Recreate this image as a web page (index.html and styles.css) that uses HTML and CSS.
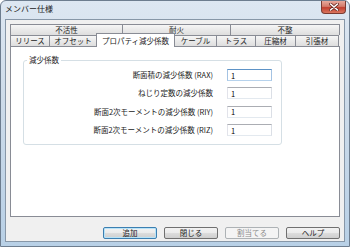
FILE: index.html
```html
<!DOCTYPE html>
<html lang="ja">
<head>
  <meta charset="UTF-8">
  <title>メンバー仕様</title>
  <link rel="stylesheet" href="styles.css">
</head>
<body>

  <div class="window">
    <!-- Title bar -->
    <div class="titlebar">
      <span class="title">メンバー仕様</span>
      <div class="close-btn">
        <svg width="10" height="8" viewBox="0 0 10 8">
          <path d="M1.5 1 L8.5 7 M8.5 1 L1.5 7" stroke="#6b2a22" stroke-width="3" stroke-linecap="round"/>
          <path d="M1.5 1 L8.5 7 M8.5 1 L1.5 7" stroke="#fff" stroke-width="1.6" stroke-linecap="round"/>
        </svg>
      </div>
    </div>

    <div class="client">
      <!-- Tabs -->
      <div class="tabs">
        <div class="tab-row">
          <div class="tab first" style="width: 113px">不活性</div>
          <div class="tab" style="width: 108px">耐火</div>
          <div class="tab" style="width: 109px">不整</div>
        </div>
        <div class="tab-row">
          <div class="tab first" style="width: 40px">リリース</div>
          <div class="tab" style="width: 47px">オフセット</div>
          <div class="tab active" style="width: 79px">プロパティ減少係数</div>
          <div class="tab" style="width: 42px">ケーブル</div>
          <div class="tab" style="width: 39px">トラス</div>
          <div class="tab" style="width: 40px">圧縮材</div>
          <div class="tab" style="width: 43px">引張材</div>
        </div>
      </div>

      <!-- Tab panel -->
      <div class="panel">
        <fieldset class="group">
          <legend>減少係数</legend>
          <div class="rows">
            <label>断面積の減少係数 (RAX)</label>
            <input type="text" class="focused" value="1">
            <label>ねじり定数の減少係数</label>
            <input type="text" value="1">
            <label>断面2次モーメントの減少係数 (RIY)</label>
            <input type="text" value="1">
            <label>断面2次モーメントの減少係数 (RIZ)</label>
            <input type="text" value="1">
          </div>
        </fieldset>
      </div>

      <!-- Buttons -->
      <div class="buttons">
        <button class="btn default">追加</button>
        <button class="btn">閉じる</button>
        <button class="btn" disabled>割当てる</button>
        <button class="btn">ヘルプ</button>
      </div>
    </div>
  </div>

</body>
</html>
```

FILE: styles.css
```css
* {
  margin: 0;
  padding: 0;
  box-sizing: border-box;
}

body {
  font-family: "Noto Sans CJK JP", "Noto Sans", sans-serif;
  font-size: 7.5px;
  color: #222;
  background-color: #fff;
}

/* Window frame */
.window {
  width: 350px;
  height: 247px;
  border: 1px solid #6d7d8f;
  border-radius: 6px 6px 0 0;
  background: linear-gradient(#dde7f2, #cddbe9 40%, #b8d0e6);
  display: flex;
  flex-direction: column;
}

.titlebar {
  height: 18px;
  display: flex;
  justify-content: space-between;
  align-items: flex-start;
  padding-left: 4px;
}

.titlebar .title {
  font-size: 8px;
  line-height: 16px;
  color: #1a1a1a;
}

.close-btn {
  width: 25px;
  height: 13px;
  margin-right: 3px;
  border: 1px solid #7a3b32;
  border-top: none;
  border-radius: 0 0 4px 4px;
  background: linear-gradient(#e8a99c, #d47b6b 45%, #c23f2f 55%, #d9765f);
  display: flex;
  align-items: center;
  justify-content: center;
}

/* Client area */
.client {
  flex: 1;
  margin: 0 4px 4px;
  border: 1px solid #8797a8;
  background-color: #f0f0f0;
  padding: 4px 4px 0;
  display: flex;
  flex-direction: column;
}

/* Tabs */
.tab-row {
  display: flex;
  height: 11px;
}

.tab {
  height: 11px;
  border-top: 1px solid #898c95;
  border-right: 1px solid #898c95;
  background: linear-gradient(#f6f6f6, #e9e9e9 50%, #dedede);
  text-align: center;
  line-height: 10px;
  white-space: nowrap;
}

.tab.first {
  border-left: 1px solid #898c95;
}

.tab.active {
  position: relative;
  z-index: 1;
  height: 14px;
  margin-top: -2px;
  background: #fff;
  border-left: 1px solid #898c95;
  margin-left: -1px;
  line-height: 13px;
}

/* Tab panel */
.panel {
  flex: 1;
  background-color: #fff;
  border: 1px solid #898c95;
  padding: 8px 0 0 12px;
}

.group {
  width: 259px;
  border: 1px solid #d5dfe5;
  border-radius: 3px;
  padding: 4px 9px 8px 3px;
  min-inline-size: 0;
}

.group legend {
  padding: 0 2px;
  line-height: 10px;
}

.rows {
  display: grid;
  grid-template-columns: 1fr 45px;
  grid-auto-rows: 12px;
  column-gap: 14px;
  row-gap: 6.4px;
}

.rows label {
  text-align: right;
  line-height: 12px;
  white-space: nowrap;
}

.rows input {
  width: 45px;
  height: 12px;
  border: 1px solid;
  border-color: #abadb3 #dbdfe6 #e3e9ef #e2e3ea;
  font-family: inherit;
  font-size: 7.5px;
  padding: 0 3px;
  line-height: 10px;
  color: #000;
  outline: none;
}

.rows input.focused {
  border-color: #5e93c7 #a4c3e3 #b6d2ec #a4c3e3;
}

/* Buttons */
.buttons {
  display: flex;
  justify-content: flex-end;
  gap: 7px;
  margin-top: 10px;
  padding-bottom: 2px;
}

.btn {
  width: 54px;
  height: 12px;
  border: 1px solid #707070;
  border-radius: 2px;
  background: linear-gradient(#f2f2f2, #ebebeb 50%, #dddddd 50%, #cfcfcf);
  font-family: inherit;
  font-size: 7.5px;
  line-height: 10px;
  color: #222;
}

.btn.default {
  border-color: #3c7fb1;
  box-shadow: inset 0 0 0 1px #b8e3f8;
}

.btn:disabled {
  border-color: #adb2b5;
  background: #f4f4f4;
  color: #8a8a8a;
}
```
